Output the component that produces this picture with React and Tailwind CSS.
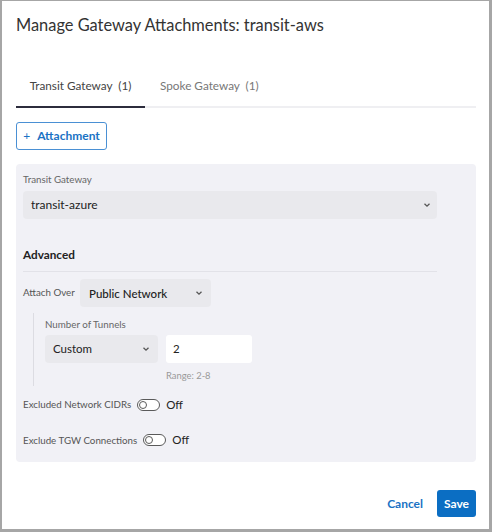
import React from "react";

const Chevron = ({ className = "" }) => (
  <svg width="8" height="6" viewBox="0 0 8 6" className={className}>
    <path d="M1.5 1.8 L4 4.2 L6.5 1.8" fill="none" stroke="#555" strokeWidth="1.3" />
  </svg>
);

const Toggle = () => (
  <span className="inline-block w-[23px] h-[12px] rounded-full border border-[#5a5a5a] bg-white relative">
    <span className="absolute left-[1px] top-[1px] w-[8px] h-[8px] rounded-full border border-[#5a5a5a] bg-white" />
  </span>
);

export default function App() {
  return (
    <div
      className="w-[492px] h-[532px] bg-white border-l-2 border-t border-r-[3px] border-b-[3px] border-[#a6a6a6] text-[#2a2a2a] relative overflow-hidden"
      style={{ fontFamily: "Lato, 'Noto Sans', sans-serif" }}
    >
      <div className="pl-[14px] pr-[13px]">
        <div className="pt-[12px] h-[70px] text-[16.4px] text-[#333]">
          Manage Gateway Attachments: transit-aws
        </div>
        <div className="flex border-b-2 border-[#efeff2] h-[37px]">
          <div className="w-[129px] flex items-start justify-center pt-[6px] border-b-2 border-[#2c2c3c] -mb-[2px] text-[11.75px] text-[#444]">
            Transit Gateway&nbsp;&nbsp;(1)
          </div>
          <div className="pl-[15px] pt-[6px] text-[11.75px] text-[#777]">
            Spoke Gateway&nbsp;&nbsp;(1)
          </div>
        </div>
        <div className="pt-[14px]">
          <button className="h-[28px] w-[91px] border border-[#4a90d4] rounded-[3px] text-[#1a72c4] text-[12px] font-bold flex items-center justify-center gap-[7px]">
            <span className="font-normal">+</span>
            <span>Attachment</span>
          </button>
        </div>
        <div className="mt-[14px] h-[298px] bg-[#f1f1f6] rounded-[4px] pl-[7px] pt-[8px] pr-[39px]">
          <div className="text-[9.75px] text-[#666]">Transit Gateway</div>
          <div className="mt-[4px] h-[28px] bg-[#e9e9ed] rounded-[4px] flex items-center justify-between pl-[8px] pr-[6px] text-[12px] text-[#222]">
            <span>transit-azure</span>
            <Chevron />
          </div>
          <div className="mt-[27px] text-[11.75px] font-bold text-[#222] pb-[8px] border-b border-[#e2e2e8]">
            Advanced
          </div>
          <div className="mt-[7px] flex items-center">
            <span className="text-[9.75px] text-[#555] w-[57px] -mt-[2px]">Attach Over</span>
            <div className="w-[131px] h-[28px] bg-[#e9e9ed] rounded-[4px] flex items-center justify-between pl-[9px] pr-[8px] text-[11.5px] font-medium text-[#222]">
              <span>Public Network</span>
              <Chevron />
            </div>
          </div>
          <div className="ml-[10px] mt-[6px] border-l border-[#dcdce2] pl-[11px] pt-[4px] pb-[3px]">
            <div className="text-[9.75px] text-[#666]">Number of Tunnels</div>
            <div className="mt-[3px] flex gap-[8px]">
              <div className="w-[113px] h-[28px] bg-[#e9e9ed] rounded-[4px] flex items-center justify-between pl-[8px] pr-[8px] text-[11.5px] text-[#222]">
                <span>Custom</span>
                <Chevron />
              </div>
              <div className="w-[86px] h-[28px] bg-white rounded-[3px] flex items-center pl-[7px] text-[11.5px] text-[#222]">2</div>
            </div>
            <div className="ml-[121px] mt-[6px] text-[9.4px] text-[#999]">Range: 2-8</div>
          </div>
          <div className="mt-[10px] flex items-center gap-[6px]">
            <span className="text-[9.75px] text-[#555]">Excluded Network CIDRs</span>
            <Toggle />
            <span className="text-[11.5px] text-[#222]">Off</span>
          </div>
          <div className="mt-[18px] flex items-center gap-[6px]">
            <span className="text-[9.75px] text-[#555]">Exclude TGW Connections</span>
            <Toggle />
            <span className="text-[11.5px] text-[#222]">Off</span>
          </div>
        </div>
        <div className="mt-[28px] flex justify-end items-center gap-[14px]">
          <span className="text-[12px] font-bold text-[#1a72c4]">Cancel</span>
          <button className="w-[39px] h-[27px] bg-[#0b6ec3] text-white rounded-[3px] text-[12px] font-bold">Save</button>
        </div>
      </div>
    </div>
  );
}
